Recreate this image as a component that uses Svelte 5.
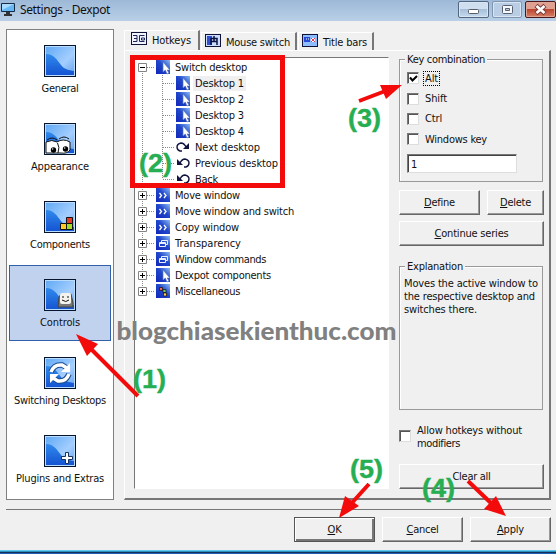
<script>
  const nav = [
    { name: 'General', kind: 'general', w: 37 },
    { name: 'Appearance', kind: 'eyes', w: 58 },
    { name: 'Components', kind: 'blocks', w: 60 },
    { name: 'Controls', kind: 'key', w: 40 },
    { name: 'Switching Desktops', kind: 'sync', w: 92 },
    { name: 'Plugins and Extras', kind: 'plus', w: 88 }
  ];
  const tree = [
    { t: 'Switch desktop', i: 'cursor', l: 0, w: 72 },
    { t: 'Desktop 1', i: 'cursor', l: 1, sel: true, w: 49 },
    { t: 'Desktop 2', i: 'cursor', l: 1, w: 49 },
    { t: 'Desktop 3', i: 'cursor', l: 1, w: 49 },
    { t: 'Desktop 4', i: 'cursor', l: 1, w: 49 },
    { t: 'Next desktop', i: 'next', l: 1, w: 65 },
    { t: 'Previous desktop', i: 'prev', l: 1, w: 83 },
    { t: 'Back', i: 'prev', l: 1, w: 23 },
    { t: 'Move window', i: 'chev', l: 0, w: 65 },
    { t: 'Move window and switch', i: 'chev', l: 0, w: 119 },
    { t: 'Copy window', i: 'chev', l: 0, w: 64 },
    { t: 'Transparency', i: 'win', l: 0, w: 66 },
    { t: 'Window commands', i: 'win', l: 0, w: 91 },
    { t: 'Dexpot components', i: 'cursor', l: 0, w: 96 },
    { t: 'Miscellaneous', i: 'misc', l: 0, w: 65 }
  ];
  const keys = [
    { t: 'Alt', on: true, w: 13 },
    { t: 'Shift', w: 22 },
    { t: 'Ctrl', w: 17 },
    { t: 'Windows key', w: 62 }
  ];
  const notes = [
    { t: '(1)', x: 133, y: 388 },
    { t: '(2)', x: 139, y: 172 },
    { t: '(3)', x: 348, y: 127 },
    { t: '(4)', x: 422, y: 497 },
    { t: '(5)', x: 350, y: 478 }
  ];

  // Adjusts tracking so a label occupies the given width.
  function fit(node, width) {
    const n = node.textContent.length;
    const gap = (width - node.getBoundingClientRect().width) / n;
    node.style.letterSpacing = `${gap}px`;
  }
</script>

{#snippet navIcon(kind)}
  <svg width="32" height="32" viewBox="0 0 32 32">
    <defs>
      <linearGradient id="sky" x1="0" y1="0" x2="1" y2="1">
        <stop offset="0" stop-color="#62aaf4" /><stop offset=".6" stop-color="#a4ceff" /><stop offset="1" stop-color="#68a3ee" />
      </linearGradient>
      <linearGradient id="sea" x1="0" y1="0" x2="0" y2="1">
        <stop offset="0" stop-color="#2f8aec" /><stop offset="1" stop-color="#1554d2" />
      </linearGradient>
    </defs>
    <rect x=".5" y=".5" width="31" height="31" fill="#b9dcff" stroke="#07142e" />
    <rect x="2" y="2" width="28" height="28" fill="url(#sky)" />
    <path d="M2 9C10 9 13 15 17 20S25 25 30 26V30H2Z" fill="url(#sea)" />
    {#if kind === 'eyes'}
      <path d="M2 19Q8 16 13 19Q19 15 26 19L26 27Q23 31 17 30H2Z" fill="#fff" stroke="#111" />
      <path d="M13.500 20Q16 24 14 30M3 17Q8 13 13 17M15 16Q20 12 25 16" fill="none" stroke="#111" />
      <circle cx="9.500" cy="27" r="2.700" fill="#000" /><circle cx="21.500" cy="26" r="2.700" fill="#000" />
      <circle cx="8.700" cy="26" r=".7" fill="#fff" /><circle cx="20.700" cy="25" r=".7" fill="#fff" />
    {:else if kind === 'blocks'}
      <path d="M22.500 16.500h6v6h-6z" fill="#e83a25" stroke="#111" />
      <path d="M16.500 22.500h6v6h-6z" fill="#ffca28" stroke="#111" />
      <path d="M22.500 22.500h6v6h-6z" fill="#a4dd28" stroke="#111" />
    {:else if kind === 'key'}
      <path d="M17 15h10l2 9v4H14l1-10z" fill="#777" stroke="#444" />
      <path d="M18 14h8q1 0 1 2v7q0 2-2 2h-7q-2 0-2-2v-7q0-2 2-2z" fill="#f5f3ed" />
      <path d="M19 17v2M24 17v2M18 21q4 3 7 0" fill="none" stroke="#111" />
    {:else if kind === 'sync'}
      <g fill="none" stroke="#174a90" stroke-width="5.500"><path d="M7 15Q10 7 18 8L23 11M25 17Q22 25 14 24L9 21" /></g>
      <g fill="none" stroke="#fff" stroke-width="3.500"><path d="M7 15Q10 7 18 8L23 11M25 17Q22 25 14 24L9 21" /></g>
      <path d="M26 6v9h-9zM6 26v-9h9z" fill="#fff" />
    {:else if kind === 'plus'}
      <path d="M21.500 17.500h3v4h4v3h-4v4h-3v-4h-4v-3h4z" fill="#fff" stroke="#15315f" />
    {/if}
  </svg>
{/snippet}

{#snippet treeIcon(kind)}
  <svg width="16" height="16" viewBox="0 0 16 16">
    {#if kind === 'next'}
      <path d="M7 12H5Q2 11 2 8T6 4Q9 4 11 8" fill="none" stroke="#111440" stroke-width="1.400" /><path d="M14 4v6H8z" fill="#111440" />
    {:else if kind === 'prev'}
      <path d="M9 12h2Q14 11 14 8T10 4Q7 4 5 8" fill="none" stroke="#111440" stroke-width="1.400" /><path d="M2 4v6h6z" fill="#111440" />
    {:else}
      <rect x="1" y="1" width="14" height="14" fill="url(#small)" />
      {#if kind === 'cursor'}
        <path d="M8 3v10l2.300-2 1.700 4 2-1-1.800-3H15z" fill="#fff" stroke="#5877b9" stroke-width=".7" />
      {:else if kind === 'chev'}
        <path d="M4.500 6l2 2.500-2 2.500M9 6l2 2.500-2 2.500" fill="none" stroke="#fff" stroke-width="1.300" />
      {:else if kind === 'win'}
        <path d="M6.500 7V5.500h6v4H11M4.500 7.500h6v4h-6zM4.500 8.500h6" fill="none" stroke="#e7f1ff" />
      {:else}
        <path d="M4.500 4.500h3v3h-3z" fill="#e65" stroke="#111" stroke-width=".7" /><path d="M8 6.500h3v3H8z" fill="#7c5" stroke="#111" stroke-width=".7" /><path d="M8.500 10h3v3h-3z" fill="#fc5" stroke="#111" stroke-width=".7" />
      {/if}
    {/if}
  </svg>
{/snippet}

<div class="window">
  <svg class="defs" width="0" height="0"><defs><linearGradient id="small" x1="0" y1="1" x2="1" y2="0"><stop offset="0" stop-color="#1126b9" /><stop offset=".55" stop-color="#2149cc" /><stop offset="1" stop-color="#8cbcf5" /></linearGradient></defs></svg>
  <header>
    <svg width="16" height="16" viewBox="0 0 16 16"><path d="M1.500 3.500h13v8h-13z" fill="#66b7f5" stroke="#162c45" /><path d="M2 4h12L2 10z" fill="#a8dbff" /><path d="M6 12h4v2h2v2H4v-2h2z" fill="#333" /></svg>
    <span class="title" use:fit={90}>Settings - Dexpot</span>
    <div class="caption">
      <i><svg width="29" height="15"><rect x="9.500" y="7.500" width="10" height="4" rx="1" fill="#fff" stroke="#555c68" /></svg></i>
      <i class="max"><svg width="28" height="15"><rect x="9.500" y="3.500" width="10" height="8" rx="1" fill="#f5f8fc" stroke="#596170" /><path d="M12.500 6.500h4v2h-4z" fill="#bdcee2" stroke="#596170" /></svg></i>
      <i class="close"><svg width="29" height="15"><path d="M10 3.500l9 8M19 3.500l-9 8" stroke="#743b37" stroke-width="4.500" /><path d="M10.500 4l8 7M18.500 4l-8 7" stroke="#fff" stroke-width="2.700" /></svg></i>
    </div>
  </header>

  <main>
    <nav>
      {#each nav as n}
        <div class="item" class:active={n.kind === 'key'}>
          {@render navIcon(n.kind)}
          <span use:fit={n.w}>{n.name}</span>
        </div>
      {/each}
    </nav>

    <div class="tabs">
      <div class="strip">
        <div class="tab first"><svg width="16" height="13"><rect x=".5" y=".5" width="15" height="12" fill="#f1f4ff" stroke="#101335" /><path d="M2 3.500h4v6H2M3 6.500h3M8.500 3.500h5M8.500 3.500v6h5M10.500 6h3v2h-3z" fill="none" stroke="#1d2457" /></svg><span use:fit={39}>Hotkeys</span></div>
        <div class="tab second"><svg width="16" height="13"><rect x=".5" y=".5" width="15" height="12" fill="#c9dcff" stroke="#101335" /><path d="M2 2h5v9H2z" fill="#2f4fd0" /><path d="M6 11V4.500h6V11M6 7.500h6M9 2v5" fill="none" stroke="#0b103d" stroke-width="1.500" /></svg><span use:fit={64}>Mouse switch</span></div>
        <div class="tab third"><svg width="16" height="13"><rect x=".5" y=".5" width="15" height="12" fill="#8dbcff" stroke="#101335" /><path d="M2 3h6v5H2z" fill="#2449d4" /><path d="M4 5h1M6 5h1" stroke="#fff" /><path d="M9 4h4v4H9z" fill="#fff" /><path d="M9 4l4 4M13 4l-4 4" stroke="#df334e" /></svg><span use:fit={44}>Title bars</span></div>
      </div>
      <div class="page">
        <div class="tree">
          {#each tree as r, i}
            <div class="row" class:child={r.l === 1}>
              <div class="gutter">
                {#if r.l === 0}
                  <svg width="20" height="16"><path d={`M7.500 ${i === 0 ? 8 : 0}V${i === 14 ? 8 : 16}M8 8.500H20`} stroke="#888" stroke-dasharray="1 1" /><path d="M3.500 4.500h8v8h-8z" fill="#fff" stroke="#848484" /><path d={i === 0 ? 'M5 8.500h5' : 'M5 8.500h5M7.500 6v5'} stroke="#000" /></svg>
                {:else}
                  <svg width="40" height="16"><path d={`M7.500 0V16M27.500 0V${i === 7 ? 8 : 16}M28 8.500H39`} stroke="#888" stroke-dasharray="1 1" /></svg>
                {/if}
              </div>
              {@render treeIcon(r.i)}
              <div class="label" class:sel={r.sel}><span use:fit={r.w}>{r.t}</span></div>
            </div>
          {/each}
        </div>

        <aside>
          <section class="group combo">
            <h2><span use:fit={78}>Key combination</span></h2>
            {#each keys as k}
              <div class="check">
                <b>{#if k.on}<svg width="9" height="9"><path d="M1 3.500l2.500 3L8 2" fill="none" stroke="#000" stroke-width="2" /></svg>{/if}</b>
                <div class="checklabel" class:focus={k.on}><span use:fit={k.w}>{k.t}</span></div>
              </div>
            {/each}
            <div class="field">1</div>
          </section>
          <div class="pair">
            <div class="btn define"><span use:fit={31}><u>D</u>efine</span></div>
            <div class="btn delete"><span use:fit={31}><u>D</u>elete</span></div>
          </div>
          <div class="btn series"><span use:fit={74}><u>C</u>ontinue series</span></div>
          <section class="group explain">
            <h2><span use:fit={56}>Explanation</span></h2>
            <p><span use:fit={134}>Moves the active window to</span><br /><span use:fit={131}>the respective desktop and</span><br /><span use:fit={73}>switches there.</span></p>
          </section>
          <div class="allow"><b></b><p><span use:fit={105}>Allow hotkeys without</span><br /><span use:fit={43}>modifiers</span></p></div>
          <div class="btn clear"><span use:fit={38}>Clear all</span></div>
        </aside>
      </div>
    </div>
  </main>

  <footer>
    <div class="btn ok"><span use:fit={14}><u>O</u>K</span></div>
    <div class="btn"><span use:fit={32}><u>C</u>ancel</span></div>
    <div class="btn"><span use:fit={27}><u>A</u>pply</span></div>
  </footer>
  <div class="edge"></div>

  <svg class="overlay" width="556" height="554" viewBox="0 0 556 554">
    <rect x="132.500" y="57.500" width="150" height="128" fill="none" stroke="#f30b0b" stroke-width="5" />
    <g stroke="#f30b0b" stroke-width="4">
      <path d="M138 396L90 348M359 101L388 90M468 481L493 505M369 484L350 505" />
    </g>
    <g fill="#f30b0b">
      <path d="M76 334L98 344L87 356ZM402 85L386 99L380 85ZM506 516L484 509L496 496ZM339 518L345 496L359 506Z" />
    </g>
    <text class="mark" x="116.500" y="340" textLength="280" lengthAdjust="spacingAndGlyphs">blogchiasekienthuc.com</text>
    {#each notes as n}
      <text class="note" x={n.x} y={n.y} textLength="33" lengthAdjust="spacingAndGlyphs">{n.t}</text>
    {/each}
  </svg>
</div>

<style>
  .window { position: relative; width: 556px; height: 554px; overflow: hidden; display: flex; flex-direction: column; background: #f0f0f0; color: #111; font: 11px/13px "DejaVu Sans Condensed", "DejaVu Sans", sans-serif; font-stretch: condensed; }
  .window * { box-sizing: border-box; }
  span { white-space: nowrap; }
  svg { display: block; flex: none; }
  .defs, .overlay { position: absolute; left: 0; top: 0; pointer-events: none; }
  header { height: 21px; flex: none; display: flex; align-items: flex-start; background: linear-gradient(#9db9d7, #b9cfe7); }
  .title { margin: 2px 0 0 4px; font: 12px/16px "Noto Sans", sans-serif; }
  .caption { margin-left: auto; padding-top: 1px; display: flex; gap: 3px; }
  .caption i { width: 31px; height: 17px; border: 1px solid #52677f; border-radius: 2px; background: linear-gradient(#d0dfef 0 45%, #a7bfd8 50%, #c6daed); box-shadow: inset 0 0 0 1px #d8e5f2; }
  .caption .max { width: 30px; border-color: #8095af; background: #b9cee5; }
  .caption .close { border-color: #4c1717; background: linear-gradient(#dfa092 0 45%, #bd4630 50%, #d58068); box-shadow: inset 0 0 0 1px #dfa493; }
  main { display: flex; height: 479px; padding: 8px 5px 0 6px; gap: 10px; flex: none; }
  nav { width: 108px; height: 471px; border: 1px solid #808080; background: #fff; padding: 0 2px; }
  .item { height: 78px; padding-top: 14px; display: flex; flex-direction: column; align-items: center; gap: 5px; }
  .item.active { height: 76px; margin: 1px 0; padding-top: 13px; background: #c1d2ee; border: 1px solid #315faa; }
  .item:not(.active) { border: 1px solid transparent; }
  .tabs { width: 427px; display: flex; flex-direction: column; padding-top: 1px; }
  .strip { height: 20px; display: flex; align-items: flex-end; }
  .tab { display: flex; gap: 5px; padding: 3px 0 0 5px; border-top: 1px solid #fff; border-left: 1px solid #fff; border-right: 2px solid #777; height: 18px; }
  .first { width: 76px; height: 20px; padding: 1px 0 0 6px; }
  .second { width: 96px; padding: 1px 0 0 3px; }
  .second span, .third span { padding-top: 2px; }
  .first span { padding-top: 2px; }
  .third { width: 76px; padding: 1px 0 0 3px; }
  .third, .second { margin-left: 1px; }
  .page { height: 450px; border: 1px solid #fff; border-right: 2px solid #777; border-bottom: 2px solid #777; padding: 6px 4px 0 9px; display: flex; gap: 10px; }
  .tree { flex: none; width: 255px; height: 432px; background: #fff; border: 1px solid #777; border-right-color: #fff; border-bottom-color: #fff; padding-top: 1px; }
  .row { height: 16px; display: flex; align-items: center; }
  .gutter { width: 20px; }
  .child .gutter { width: 40px; }
  .label { margin-left: 2px; padding: 0 2px; height: 15px; line-height: 15px; }
  .sel { background: #f0f0f0; }
  aside { flex: none; width: 145px; padding-top: 2px; }
  .group { border: 1px solid #999; box-shadow: inset 1px 1px #fff; }
  h2 { font: inherit; height: 13px; width: max-content; padding: 0 2px; margin: -7px 0 0 5px; background: #f0f0f0; }
  .combo { width: 144px; height: 123px; }
  .check { height: 20.400px; display: flex; align-items: center; gap: 4px; padding-left: 7px; }
  h2 + .check { margin-top: 2px; }
  b { width: 12px; height: 12px; flex: none; border: 1px solid #777; border-right-color: #ddd; border-bottom-color: #ddd; background: #fff; box-shadow: inset 1px 1px #555; padding: 1px; }
  .checklabel { padding: 0 1px; border: 1px solid transparent; height: 15px; }
  .focus { border: 1px dotted #000; }
  .field { width: 110px; height: 19px; margin: 4px 0 0 7px; border: 1px solid #777; border-color: #777 #ddd #ddd #777; box-shadow: inset 1px 1px #444; background: #fff; padding: 3px; }
  .btn { display: flex; align-items: center; justify-content: center; height: 25px; border: 1px solid; border-color: #fff #666 #666 #fff; box-shadow: inset -1px -1px #999; }
  .pair { display: flex; gap: 7px; margin: 8px 0 6px; }
  .define { width: 81px; }
  .delete { width: 57px; }
  .series { width: 145px; }
  .explain { width: 144px; height: 144px; margin-top: 20px; }
  p { margin: 0; }
  .explain p { padding: 4px 0 0 4px; }
  .allow { display: flex; gap: 6px; margin-top: 14px; height: 26px; }
  .allow b { margin-top: 6px; }
  .clear { width: 145px; margin-top: 14px; }
  footer { flex: none; margin: 9px 5px 0 6px; border-top: 1px solid #777; padding: 7px 0 0; display: flex; justify-content: flex-end; gap: 7px; height: 41px; }
  footer .btn { width: 81px; }
  .ok { border: 1px solid #555; box-shadow: inset 1px 1px #fff, inset -2px -2px #777; }
  .edge { height: 4px; flex: none; background: linear-gradient(#61c8ec 0 1px, #2991bd 1px 2px, #172f57 2px 3px, #1f60b5 3px); }
  .mark { font: 900 25px Lato, "Liberation Sans", sans-serif; fill: #808080; }
  .note { font: 700 25px "Liberation Sans", sans-serif; fill: #27ae52; stroke: #27ae52; stroke-width: .4; }
</style>
